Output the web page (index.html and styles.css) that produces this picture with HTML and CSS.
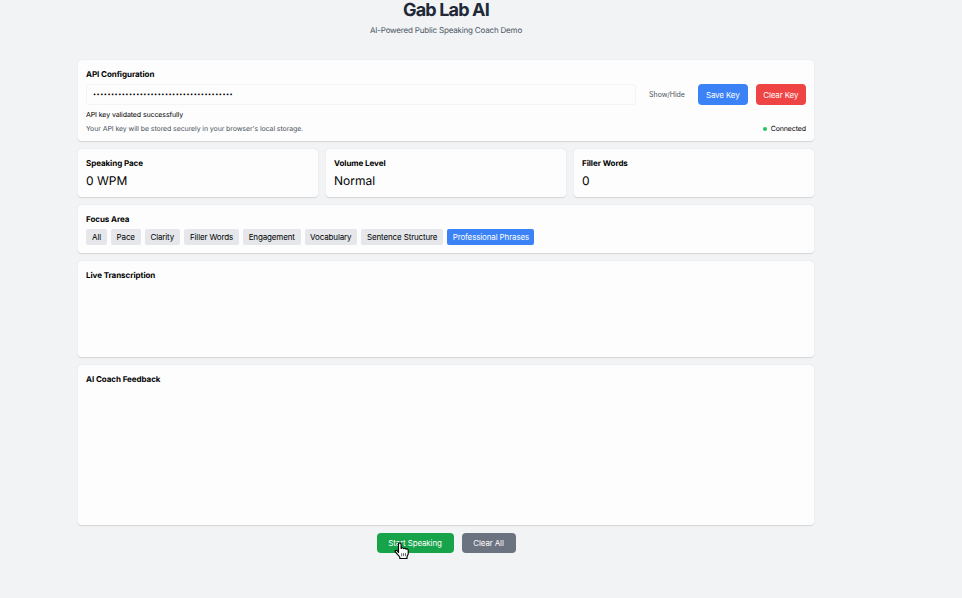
FILE: index.html
```html
<!DOCTYPE html>
<html lang="en">
<head>
<meta charset="utf-8">
<title>Gab Lab AI</title>
<link rel="stylesheet" href="styles.css">
</head>
<body>
<main class="container">
  <header class="header">
    <h1>Gab Lab AI</h1>
    <p>AI-Powered Public Speaking Coach Demo</p>
  </header>
  <section class="card api">
    <h2>API Configuration</h2>
    <div class="key-row">
      <div class="key-input"><span class="dots">•••••••••••••••••••••••••••••••••••••••</span></div>
      <button class="toggle">Show/Hide</button>
      <button class="btn blue save">Save Key</button>
      <button class="btn red clear">Clear Key</button>
    </div>
    <p class="valid">API key validated successfully</p>
    <div class="status-row">
      <span class="hint">Your API key will be stored securely in your browser's local storage.</span>
      <span class="status"><i class="dot"></i><span class="connected">Connected</span></span>
    </div>
  </section>
  <div class="stats">
    <section class="card"><h2>Speaking Pace</h2><p class="value"><span>0 WPM</span></p></section>
    <section class="card"><h2>Volume Level</h2><p class="value"><span>Normal</span></p></section>
    <section class="card"><h2>Filler Words</h2><p class="value"><span>0</span></p></section>
  </div>
  <section class="card focus">
    <h2>Focus Area</h2>
    <div class="pills">
      <button class="pill p1">All</button>
      <button class="pill p2">Pace</button>
      <button class="pill p3">Clarity</button>
      <button class="pill p4">Filler Words</button>
      <button class="pill p5">Engagement</button>
      <button class="pill p6">Vocabulary</button>
      <button class="pill p7">Sentence Structure</button>
      <button class="pill p8 active">Professional Phrases</button>
    </div>
  </section>
  <section class="card live"><h2>Live Transcription</h2></section>
  <section class="card feedback"><h2>AI Coach Feedback</h2></section>
  <div class="actions">
    <button class="btn green start">Start Speaking</button>
    <button class="btn gray reset">Clear All</button>
  </div>
</main>
<svg class="cursor" width="17" height="18" viewBox="0 0 16 18" preserveAspectRatio="none">
  <path d="M4.200 10.500V2.200c0-1.800 2.500-1.800 2.500 0v4.200c.5-1 2.100-.8 2.300.3.600-.8 2-.6 2.200.5.800-.6 2.200-.2 2.200 1.200v3c0 1.500-1 2.300-1.200 3.600v1.500H5.500V15.200C4.700 13.500 2.900 12 1.400 10.100c-.9-1.300.6-2.400 1.600-1.300z" fill="#fff" stroke="#000" stroke-width="1.100" stroke-linejoin="round"/>
  <path d="M7.200 11.200v3M9 11.200v3M10.800 11.200v3" stroke="#000" stroke-width=".6"/>
</svg>
</body>
</html>
```
FILE: styles.css
```css
* { box-sizing: border-box; margin: 0; padding: 0; }
body {
  width: 962px;
  height: 598px;
  overflow: hidden;
  background: #f1f3f5;
  color: #000;
  font: 8px/12px Inter, "Liberation Sans", sans-serif;
  text-rendering: geometricPrecision;
}
button { border: 0; font: inherit; white-space: nowrap; text-align: center; }
.container { width: 736px; margin-left: 78px; display: flex; flex-direction: column; gap: 8px; }
.header { height: 52px; text-align: center; color: #1f2937; }
h1 { font-size: 18px; line-height: 22px; font-weight: 700; letter-spacing: -.85px; }
.header p { margin-top: 2px; color: #4b5563; letter-spacing: -.18px; }
.card {
  background: #fdfdfd;
  border-radius: 4px;
  padding: 8px;
  box-shadow: 0 .5px 1.5px rgba(0, 0, 0, .08), 0 .5px 1px rgba(0, 0, 0, .06);
}
h2 { font-size: 8px; line-height: 12px; font-weight: 700; letter-spacing: -.06px; }
.api { height: 81px; }
.key-row { display: flex; height: 21px; margin-top: 4px; align-items: center; }
.key-input {
  width: 550px;
  height: 21px;
  padding-left: 6px;
  border: 1px solid #f3f4f6;
  border-radius: 3px;
  line-height: 21px;
}
.dots { font-size: 5.500px; letter-spacing: .5px; vertical-align: top; }
.toggle { width: 46px; margin-left: 8px; background: none; color: #4b5563; font-size: 7px; letter-spacing: -.05px; }
.btn { height: 20px; border-radius: 4px; color: #fff; line-height: 20px; letter-spacing: -.14px; }
.key-row .btn { height: 20.500px; }
.save { width: 49.500px; margin-left: 8px; }
.clear { width: 50.500px; margin-left: 8px; }
.blue { background: #3b82f6; }
.red { background: #ef4444; }
.green { background: #16a34a; }
.gray { background: #6b7280; }
.valid { margin-top: 4px; font-size: 7px; line-height: 11px; letter-spacing: -.1px; }
.status-row { display: flex; justify-content: space-between; margin-top: 4px; font-size: 7px; line-height: 10px; letter-spacing: -.1px; }
.hint { color: #4b5563; }
.status { display: flex; align-items: center; gap: 4px; }
.dot { width: 4px; height: 4px; border-radius: 50%; background: #22c55e; }
.stats { display: grid; grid-template-columns: repeat(3, 1fr); gap: 8px; }
.stats .card { height: 48px; }
.value { margin-top: 4px; font-size: 12px; line-height: 16px; }
.focus { height: 48px; }
.pills { display: flex; gap: 4px; margin-top: 4px; }
.pill { height: 16px; line-height: 16px; border-radius: 2px; background: #e5e7eb; color: #000; letter-spacing: -.14px; }
.pill.active { background: #3b82f6; color: #fff; }
.p1 { width: 21px; }
.p2 { width: 29.500px; }
.p3 { width: 35.500px; }
.p4 { width: 55px; }
.p5 { width: 57.500px; }
.p6 { width: 52.500px; }
.p7 { width: 82.400px; }
.p8 { width: 87px; }
.live { height: 96px; }
.feedback { height: 160px; }
.actions { display: flex; justify-content: center; gap: 8px; }
.start { width: 77px; }
.reset { width: 54px; }
.cursor { position: absolute; left: 394px; top: 542px; }
```
